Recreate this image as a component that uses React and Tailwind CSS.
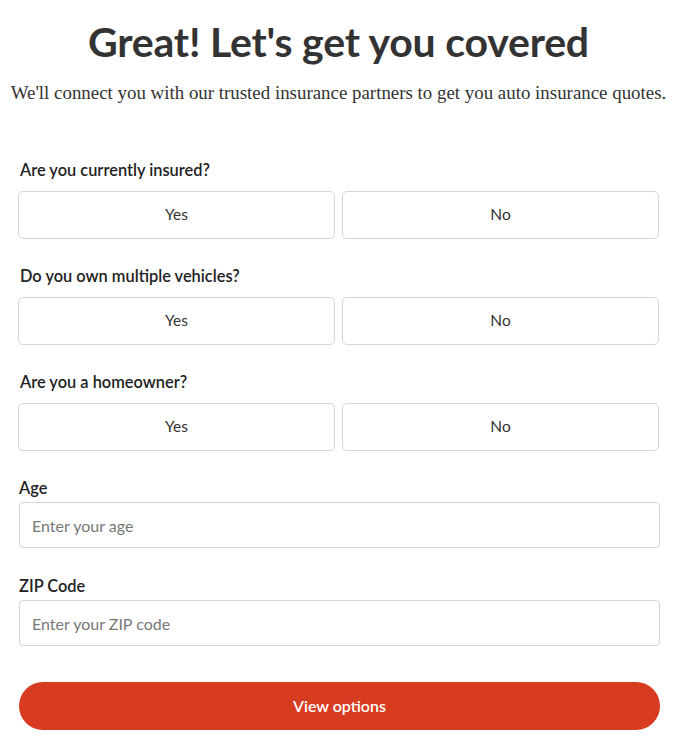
import React, { useState } from "react";

const questions = [
  { id: "insured", label: "Are you currently insured?" },
  { id: "vehicles", label: "Do you own multiple vehicles?" },
  { id: "homeowner", label: "Are you a homeowner?" },
];

const ChoiceRow = ({ q, value, onChange }) => (
  <div className="mb-[27px]">
    <label className="block text-[16.4px] leading-[20px] font-semibold text-[#222] mb-[11px] pl-[2px]">
      {q.label}
    </label>
    <div className="grid grid-cols-2 gap-[7px]">
      {["Yes", "No"].map((opt) => (
        <button
          key={opt}
          onClick={() => onChange(q.id, opt)}
          className={`h-[48px] rounded-[5px] border text-[15.5px] text-[#333] bg-white ${
            value === opt ? "border-[#d83c20]" : "border-[#d6d6d6]"
          }`}
        >
          {opt}
        </button>
      ))}
    </div>
  </div>
);

const TextField = ({ label, placeholder, mb }) => (
  <div className={mb}>
    <label className="block text-[16.4px] leading-[20px] font-semibold text-[#222] mb-[4px] pl-[1px]">
      {label}
    </label>
    <input
      type="text"
      placeholder={placeholder}
      className="w-full ml-[1px] h-[46px] rounded-[4px] border border-[#d6d6d6] px-[12px] text-[16px] text-[#333] placeholder:text-[#777] focus:outline-none"
    />
  </div>
);

export default function App() {
  const [answers, setAnswers] = useState({});
  const setAnswer = (id, v) => setAnswers((a) => ({ ...a, [id]: v }));

  return (
    <div className="min-h-screen bg-white font-['Lato',sans-serif]">
      <div className="w-[641px] ml-[18px] pt-[14px]">
        <h1 className="text-center text-[41px] leading-[56px] font-bold text-[#333] tracking-[-0.2px]">
          Great! Let's get you covered
        </h1>
        <div className="flex justify-center -mx-[20px] mt-[10px] mb-[54px]">
          <p className="whitespace-nowrap font-['Liberation_Serif',serif] text-[18.9px] leading-[26px] text-[#333]">
            We'll connect you with our trusted insurance partners to get you auto insurance quotes.
          </p>
        </div>

        {questions.map((q) => (
          <ChoiceRow key={q.id} q={q} value={answers[q.id]} onChange={setAnswer} />
        ))}

        <TextField label="Age" placeholder="Enter your age" mb="mb-[28px]" />
        <TextField label="ZIP Code" placeholder="Enter your ZIP code" mb="mb-[36px]" />

        <button className="w-full ml-[1px] h-[48px] rounded-full bg-[#d83c20] text-white text-[16px] font-semibold">
          View options
        </button>
      </div>
    </div>
  );
}
